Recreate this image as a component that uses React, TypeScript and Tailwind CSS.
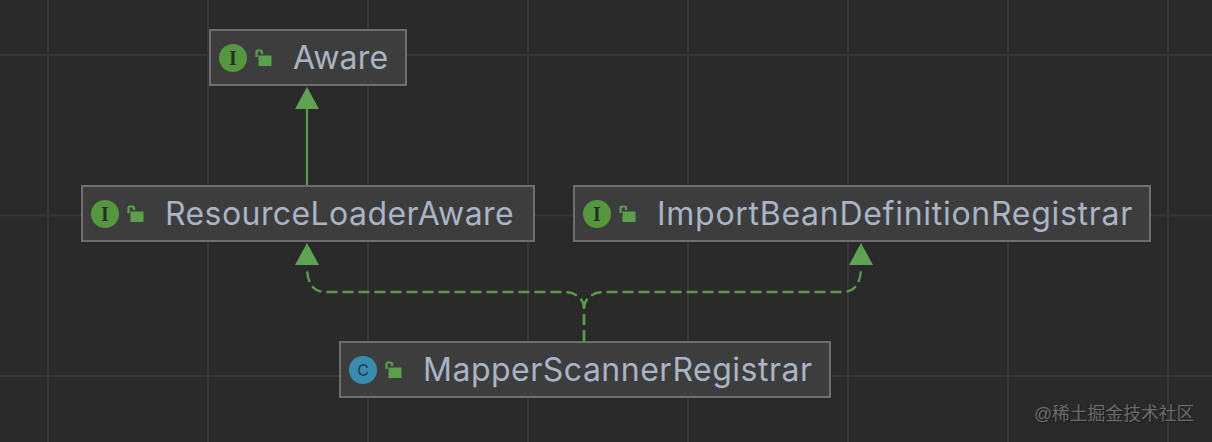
import React from 'react';

const LockIcon: React.FC = () => (
  <svg width="18" height="18" viewBox="0 0 18 18" className="shrink-0">
    <path d="M2.5 8V3.2Q2.5 1.5 4.2 1.5H6.3Q8 1.5 8 3.2V5" fill="none" stroke="#5b9e4d" strokeWidth="2.2" />
    <rect x="4.5" y="6.5" width="13" height="10.5" fill="#5ba04d" />
  </svg>
);

const Badge: React.FC<{ letter: string; kind: 'interface' | 'class' }> = ({ letter, kind }) => (
  <span
    className={
      kind === 'interface'
        ? 'w-7 h-7 rounded-full shrink-0 flex items-center justify-center bg-[#56963f] text-[#25311f] text-[20px] font-bold font-["Liberation_Serif",serif]'
        : 'w-7 h-7 rounded-full shrink-0 flex items-center justify-center bg-[#3a8cae] text-[#1e4560] text-[16px] font-medium font-["Inter",sans-serif]'
    }
  >
    {letter}
  </span>
);

const Node: React.FC<{ name: string; kind?: 'interface' | 'class'; letter?: string; className: string; tracking?: string }> = ({
  name,
  kind = 'interface',
  letter = 'I',
  className,
  tracking = 'tracking-[0.5px]',
}) => (
  <div className={`absolute h-[57px] flex items-center pl-2 border-2 border-[#6e6e6e] bg-[#3d3d3e] ${className}`}>
    <Badge letter={letter} kind={kind} />
    <span className="ml-[7px]">
      <LockIcon />
    </span>
    <span className={`ml-[21px] text-[32px] leading-none text-[#a9b4c4] whitespace-nowrap font-['Inter',sans-serif] ${tracking}`}>
      {name}
    </span>
  </div>
);

const Edges: React.FC = () => (
  <svg width="1212" height="442" viewBox="0 0 1212 442" className="absolute inset-0" fill="none">
    <path d="M307 109V185" stroke="#5b9a4e" strokeWidth="2.2" />
    <path d="M307 87L319 109H295Z" fill="#5fa352" />
    <path
      d="M584 341V308C584 298 574 292 565 292H325C314 292 307 284 307 267"
      stroke="#5b9a4e"
      strokeWidth="2.4"
      strokeDasharray="11 5"
    />
    <path
      d="M584 341V308C584 298 594 292 603 292H843C854 292 861 284 861 267"
      stroke="#5b9a4e"
      strokeWidth="2.4"
      strokeDasharray="11 5"
    />
    <path d="M307 243L319 265H295Z" fill="#5fa352" />
    <path d="M861 243L873 265H849Z" fill="#5fa352" />
  </svg>
);

const App: React.FC = () => {
  return (
    <div className="relative w-[1212px] h-[442px] overflow-hidden bg-[#2a2a2b] bg-[linear-gradient(to_right,#363637_2px,transparent_2px),linear-gradient(to_bottom,#363637_2px,transparent_2px)] bg-[size:160px_160.5px] bg-[position:47px_54px]">
      <Edges />
      <Node name="Aware" tracking="tracking-[0.25px]" className="left-[209px] top-[29px] w-[198px]" />
      <Node name="ResourceLoaderAware" tracking="tracking-[0.42px]" className="left-[81px] top-[185px] w-[454px]" />
      <Node name="ImportBeanDefinitionRegistrar" tracking="tracking-[0.72px]" className="left-[573px] top-[185px] w-[578px]" />
      <Node name="MapperScannerRegistrar" kind="class" letter="C" className="left-[339px] top-[341px] w-[492px]" />
      <div className="absolute left-[1034px] top-[403px] text-[17.8px] leading-[22px] text-[#6b6b6c] whitespace-nowrap [text-shadow:1px_1px_1px_#1c1c1c] font-['Liberation_Sans','Noto_Sans_CJK_SC',sans-serif]">
        @稀土掘金技术社区
      </div>
    </div>
  );
};

export default App;
